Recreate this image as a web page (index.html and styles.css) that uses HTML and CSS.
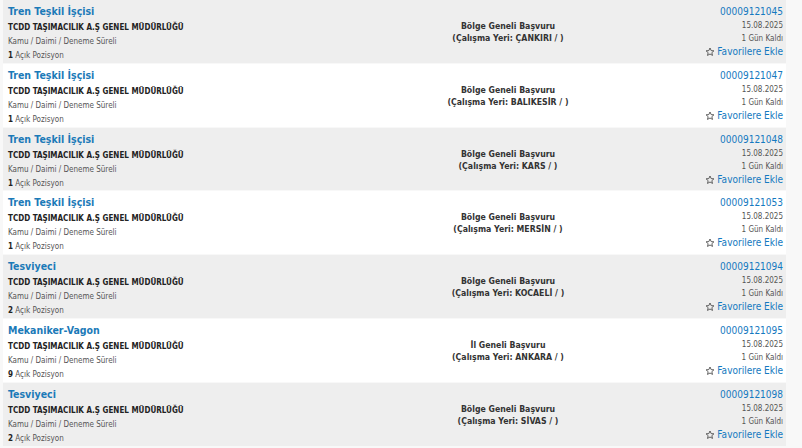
FILE: index.html
```html
<!DOCTYPE html>
<html lang="tr">
  <head>
    <meta charset="utf-8" />
    <title>İlanlar</title>
    <link rel="stylesheet" href="styles.css">
  </head>
  <body>
    <div class="list">

      <div class="row odd">
        <div class="left">
          <a class="title">Tren Teşkil İşçisi</a>
          <div class="company">TCDD TAŞIMACILIK A.Ş GENEL MÜDÜRLÜĞÜ</div>
          <div class="kind">Kamu / Daimi / Deneme Süreli</div>
          <div class="count"><b>1</b> Açık Pozisyon</div>
        </div>
        <div class="mid">
          <div>Bölge Geneli Başvuru</div>
          <div>(Çalışma Yeri: ÇANKIRI / )</div>
        </div>
        <div class="right">
          <a class="no">00009121045</a>
          <div class="date">15.08.2025</div>
          <div class="days">1 Gün Kaldı</div>
          <a class="fav"><svg viewBox="0 0 12 12"><path d="M6 1.2l1.4 3.1 3.3.3-2.5 2.2.8 3.3L6 8.4 3 10.1l.8-3.3-2.5-2.2 3.3-.3z"/></svg>Favorilere Ekle</a>
        </div>
      </div>

      <div class="row">
        <div class="left">
          <a class="title">Tren Teşkil İşçisi</a>
          <div class="company">TCDD TAŞIMACILIK A.Ş GENEL MÜDÜRLÜĞÜ</div>
          <div class="kind">Kamu / Daimi / Deneme Süreli</div>
          <div class="count"><b>1</b> Açık Pozisyon</div>
        </div>
        <div class="mid">
          <div>Bölge Geneli Başvuru</div>
          <div>(Çalışma Yeri: BALIKESİR / )</div>
        </div>
        <div class="right">
          <a class="no">00009121047</a>
          <div class="date">15.08.2025</div>
          <div class="days">1 Gün Kaldı</div>
          <a class="fav"><svg viewBox="0 0 12 12"><path d="M6 1.2l1.4 3.1 3.3.3-2.5 2.2.8 3.3L6 8.4 3 10.1l.8-3.3-2.5-2.2 3.3-.3z"/></svg>Favorilere Ekle</a>
        </div>
      </div>

      <div class="row odd">
        <div class="left">
          <a class="title">Tren Teşkil İşçisi</a>
          <div class="company">TCDD TAŞIMACILIK A.Ş GENEL MÜDÜRLÜĞÜ</div>
          <div class="kind">Kamu / Daimi / Deneme Süreli</div>
          <div class="count"><b>1</b> Açık Pozisyon</div>
        </div>
        <div class="mid">
          <div>Bölge Geneli Başvuru</div>
          <div>(Çalışma Yeri: KARS / )</div>
        </div>
        <div class="right">
          <a class="no">00009121048</a>
          <div class="date">15.08.2025</div>
          <div class="days">1 Gün Kaldı</div>
          <a class="fav"><svg viewBox="0 0 12 12"><path d="M6 1.2l1.4 3.1 3.3.3-2.5 2.2.8 3.3L6 8.4 3 10.1l.8-3.3-2.5-2.2 3.3-.3z"/></svg>Favorilere Ekle</a>
        </div>
      </div>

      <div class="row">
        <div class="left">
          <a class="title">Tren Teşkil İşçisi</a>
          <div class="company">TCDD TAŞIMACILIK A.Ş GENEL MÜDÜRLÜĞÜ</div>
          <div class="kind">Kamu / Daimi / Deneme Süreli</div>
          <div class="count"><b>1</b> Açık Pozisyon</div>
        </div>
        <div class="mid">
          <div>Bölge Geneli Başvuru</div>
          <div>(Çalışma Yeri: MERSİN / )</div>
        </div>
        <div class="right">
          <a class="no">00009121053</a>
          <div class="date">15.08.2025</div>
          <div class="days">1 Gün Kaldı</div>
          <a class="fav"><svg viewBox="0 0 12 12"><path d="M6 1.2l1.4 3.1 3.3.3-2.5 2.2.8 3.3L6 8.4 3 10.1l.8-3.3-2.5-2.2 3.3-.3z"/></svg>Favorilere Ekle</a>
        </div>
      </div>

      <div class="row odd">
        <div class="left">
          <a class="title">Tesviyeci</a>
          <div class="company">TCDD TAŞIMACILIK A.Ş GENEL MÜDÜRLÜĞÜ</div>
          <div class="kind">Kamu / Daimi / Deneme Süreli</div>
          <div class="count"><b>2</b> Açık Pozisyon</div>
        </div>
        <div class="mid">
          <div>Bölge Geneli Başvuru</div>
          <div>(Çalışma Yeri: KOCAELİ / )</div>
        </div>
        <div class="right">
          <a class="no">00009121094</a>
          <div class="date">15.08.2025</div>
          <div class="days">1 Gün Kaldı</div>
          <a class="fav"><svg viewBox="0 0 12 12"><path d="M6 1.2l1.4 3.1 3.3.3-2.5 2.2.8 3.3L6 8.4 3 10.1l.8-3.3-2.5-2.2 3.3-.3z"/></svg>Favorilere Ekle</a>
        </div>
      </div>

      <div class="row">
        <div class="left">
          <a class="title">Mekaniker-Vagon</a>
          <div class="company">TCDD TAŞIMACILIK A.Ş GENEL MÜDÜRLÜĞÜ</div>
          <div class="kind">Kamu / Daimi / Deneme Süreli</div>
          <div class="count"><b>9</b> Açık Pozisyon</div>
        </div>
        <div class="mid">
          <div>İl Geneli Başvuru</div>
          <div>(Çalışma Yeri: ANKARA / )</div>
        </div>
        <div class="right">
          <a class="no">00009121095</a>
          <div class="date">15.08.2025</div>
          <div class="days">1 Gün Kaldı</div>
          <a class="fav"><svg viewBox="0 0 12 12"><path d="M6 1.2l1.4 3.1 3.3.3-2.5 2.2.8 3.3L6 8.4 3 10.1l.8-3.3-2.5-2.2 3.3-.3z"/></svg>Favorilere Ekle</a>
        </div>
      </div>

      <div class="row odd">
        <div class="left">
          <a class="title">Tesviyeci</a>
          <div class="company">TCDD TAŞIMACILIK A.Ş GENEL MÜDÜRLÜĞÜ</div>
          <div class="kind">Kamu / Daimi / Deneme Süreli</div>
          <div class="count"><b>2</b> Açık Pozisyon</div>
        </div>
        <div class="mid">
          <div>Bölge Geneli Başvuru</div>
          <div>(Çalışma Yeri: SİVAS / )</div>
        </div>
        <div class="right">
          <a class="no">00009121098</a>
          <div class="date">15.08.2025</div>
          <div class="days">1 Gün Kaldı</div>
          <a class="fav"><svg viewBox="0 0 12 12"><path d="M6 1.2l1.4 3.1 3.3.3-2.5 2.2.8 3.3L6 8.4 3 10.1l.8-3.3-2.5-2.2 3.3-.3z"/></svg>Favorilere Ekle</a>
        </div>
      </div>

    </div>
  </body>
</html>
```

FILE: styles.css
```css
body {
  margin: 0;
  background-color: #f8f8f8;
  font-family: "DejaVu Sans Condensed", "DejaVu Sans", sans-serif;
  color: #333;
}

.list {
  width: 783px;
  padding-left: 3px;
}

.row {
  display: grid;
  grid-template-columns: 375px 250px 1fr;
  height: 62.8px;
  margin-bottom: 1px;
  padding: 0 3px 0 5px;
  background: #fff;
}

.row.odd {
  background: #eeeeee;
}

.left a.title {
  display: block;
  margin-top: 4px;
  font-size: 10.5px;
  font-weight: bold;
  line-height: 15px;
  color: #1b7ab8;
}

.company {
  margin-top: 2px;
  font-size: 8px;
  font-weight: bold;
  line-height: 14px;
  color: #222;
}

.kind,
.count {
  font-size: 8px;
  line-height: 14px;
  color: #555;
}

.count b {
  color: #222;
}

.mid {
  padding-top: 20px;
  text-align: center;
  font-size: 8.7px;
  font-weight: bold;
  line-height: 12px;
  color: #333;
}

.right {
  text-align: right;
}

.right a.no {
  display: block;
  margin-top: 5px;
  font-size: 10px;
  line-height: 14px;
  color: #1479c0;
}

.date,
.days {
  font-size: 8px;
  line-height: 13px;
  color: #555;
}

.fav {
  display: flex;
  justify-content: flex-end;
  align-items: center;
  gap: 2px;
  font-size: 10px;
  line-height: 14px;
  color: #1479c0;
}

.fav svg {
  width: 10px;
  height: 10px;
  fill: none;
  stroke: #444;
  stroke-width: 1;
}
```
